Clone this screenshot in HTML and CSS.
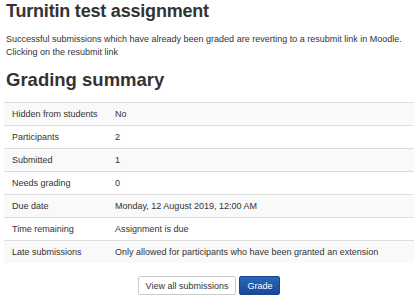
FILE: index.html
```html
<!DOCTYPE html>
<html lang="en">
<head>
    <meta charset="UTF-8">
    <meta name="viewport" content="width=device-width, initial-scale=1.0">
    <title>Turnitin test assignment</title>
    <link rel="stylesheet" href="styles.css">
</head>
<body>

<div class="page">
    <h2 class="title">Turnitin test assignment</h2>
    <div class="intro">
        <p>Successful submissions which have already been graded are reverting to a resubmit link in Moodle.<br>Clicking on the resubmit link</p>
    </div>

    <h3 class="section-title">Grading summary</h3>

    <!-- summary table -->
    <table class="summary">
        <tr><td class="label">Hidden from students</td><td>No</td></tr>
        <tr><td class="label">Participants</td><td>2</td></tr>
        <tr><td class="label">Submitted</td><td>1</td></tr>
        <tr><td class="label">Needs grading</td><td>0</td></tr>
        <tr><td class="label">Due date</td><td>Monday, 12 August 2019, 12:00 AM</td></tr>
        <tr><td class="label">Time remaining</td><td>Assignment is due</td></tr>
        <tr><td class="label">Late submissions</td><td>Only allowed for participants who have been granted an extension</td></tr>
    </table>

    <div class="actions">
        <button class="btn">View all submissions</button>
        <button class="btn btn-primary">Grade</button>
    </div>
</div>

</body>
</html>
```

FILE: styles.css
```css
body {
    font-family: "Liberation Sans", Arial, sans-serif;
    color: #333;
    margin: 0;
    background: #fff;
}
.page {
    padding: 0 1px 0 4px;
}
.title {
    font-size: 18px;
    font-weight: bold;
    letter-spacing: -0.2px;
    margin: 0;
    padding-left: 2px;
    line-height: 22px;
}
.intro p {
    font-size: 9px;
    line-height: 13px;
    margin: 11px 0 0 0;
    padding-left: 2px;
}
.section-title {
    font-size: 18.5px;
    font-weight: bold;
    margin: 10px 0 0 0;
    padding-left: 2px;
    line-height: 22px;
}
.summary {
    width: 100%;
    border-collapse: collapse;
    margin-top: 11px;
    font-size: 9px;
}
.summary td {
    border-top: 1px solid #ddd;
    padding: 0 8px;
    height: 22px;
    vertical-align: middle;
}
.summary tr:nth-child(odd) td {
    background-color: #f9f9f9;
}
.summary .label {
    width: 87px;
}
.actions {
    display: flex;
    justify-content: center;
    gap: 3px;
    margin-top: 13px;
}
.btn {
    font-family: "Liberation Sans", Arial, sans-serif;
    font-size: 9px;
    padding: 0 7px;
    height: 19px;
    background-color: #fff;
    color: #333;
    border: 1px solid #ccc;
    border-radius: 2px;
}
.btn-primary {
    background: linear-gradient(#2a6ab9, #17489a);
    border-color: #164690;
    color: #fff;
}
```
